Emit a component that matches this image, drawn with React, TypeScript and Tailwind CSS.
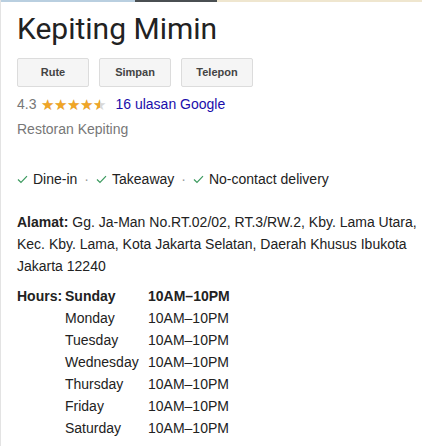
const HOURS = [
  { day: 'Sunday', time: '10AM–10PM', today: true },
  { day: 'Monday', time: '10AM–10PM' },
  { day: 'Tuesday', time: '10AM–10PM' },
  { day: 'Wednesday', time: '10AM–10PM' },
  { day: 'Thursday', time: '10AM–10PM' },
  { day: 'Friday', time: '10AM–10PM' },
  { day: 'Saturday', time: '10AM–10PM' },
];

const SERVICES = ['Dine-in', 'Takeaway', 'No-contact delivery'];

function Check() {
  return (
    <svg width="11" height="9" viewBox="0 0 11 9" className="mr-[5px]">
      <path d="M1 4.5 L4 7.5 L10 1.2" fill="none" stroke="#3c9a5f" strokeWidth="1.2" />
    </svg>
  );
}

function Stars({ value }: { value: number }) {
  return (
    <span className="flex text-[15px] leading-none">
      {[0, 1, 2, 3, 4].map((i) => {
        const fill = Math.max(0, Math.min(1, value - i));
        return (
          <span key={i} className="relative text-[#d8d8d8]">
            ★
            <span className="absolute left-0 top-0 overflow-hidden text-[#f0a526]" style={{ width: `${fill * 100}%` }}>
              ★
            </span>
          </span>
        );
      })}
    </span>
  );
}

export default function App() {
  return (
    <div className="w-[422px] h-[446px] overflow-hidden bg-white border-l border-[#e3e3e3] font-['Liberation_Sans',Arial,sans-serif] text-[#222]">
      {/* thin edge of the photo strip above the panel */}
      <div className="flex h-[2px]">
        <div className="w-[134px] bg-[#b9cfe0]" />
        <div className="w-[82px] bg-[#4a4f52]" />
        <div className="flex-1 bg-[#efe6cf]" />
      </div>

      <div className="pl-4">
        <h1 className="mt-[9px] text-[30px] leading-[36px] text-[#222] font-['Roboto',sans-serif]">Kepiting Mimin</h1>

        <div className="mt-[11px] flex gap-[10px]">
          {['Rute', 'Simpan', 'Telepon'].map((b) => (
            <button
              key={b}
              className="w-[72px] h-[29px] rounded-[2px] border border-[#dcdcdc] bg-[#f5f5f5] text-[11px] font-bold text-[#444]">
              {b}
            </button>
          ))}
        </div>

        <div className="mt-[8px] flex items-center h-[18px] text-[14px]">
          <span className="text-[#777] mr-[5px]">4.3</span>
          <Stars value={4.5} />
          <span className="ml-[9px] text-[#1a0dab]">16 ulasan Google</span>
        </div>

        <div className="mt-[7px] text-[14px] text-[#777] leading-[18px]">Restoran Kepiting</div>

        <div className="mt-[32px] flex items-center text-[14px] leading-[18px]">
          {SERVICES.map((s, i) => (
            <span key={s} className="flex items-center">
              {i > 0 && <span className="mx-[7px] text-[#999]">·</span>}
              <Check />
              {s}
            </span>
          ))}
        </div>

        <p className="mt-[23px] w-[405px] text-[14px] leading-[22px]">
          <b>Alamat:</b> Gg. Ja-Man No.RT.02/02, RT.3/RW.2, Kby. Lama Utara, Kec. Kby. Lama, Kota Jakarta Selatan, Daerah Khusus Ibukota Jakarta 12240
        </p>

        <div className="mt-[8px] flex text-[14px] leading-[22px]">
          <b className="w-[48px]">Hours:</b>
          <div className="grid grid-cols-[83px_auto]">
            {HOURS.map((h) => (
              <div key={h.day} className={`contents ${h.today ? 'font-bold' : ''}`}>
                <span>{h.day}</span>
                <span>{h.time}</span>
              </div>
            ))}
          </div>
        </div>
      </div>
    </div>
  );
}
